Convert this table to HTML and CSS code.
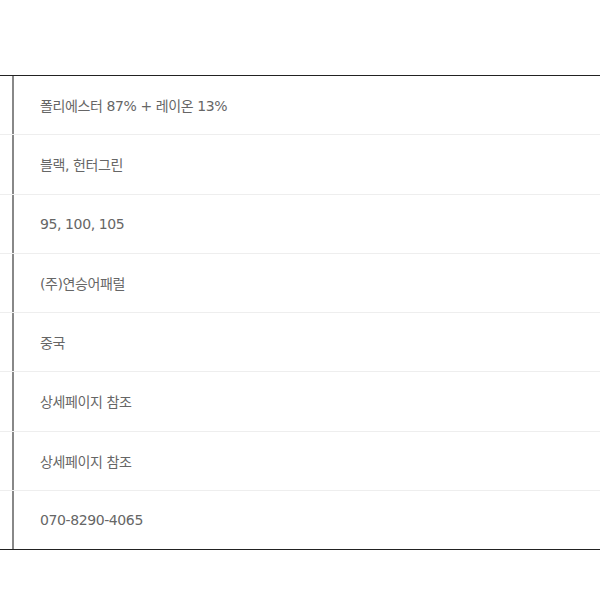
FILE: index.html
```html
<!DOCTYPE html>
<html lang="ko">
<head>
<meta charset="utf-8">
<link rel="stylesheet" href="styles.css">
</head>
<body>
<div class="spec">
  <div class="row"><div class="label"></div><div class="value">폴리에스터 87% + 레이온 13%</div></div>
  <div class="row"><div class="label"></div><div class="value">블랙, 헌터그린</div></div>
  <div class="row"><div class="label"></div><div class="value">95, 100, 105</div></div>
  <div class="row"><div class="label"></div><div class="value">(주)연승어패럴</div></div>
  <div class="row"><div class="label"></div><div class="value">중국</div></div>
  <div class="row"><div class="label"></div><div class="value">상세페이지 참조</div></div>
  <div class="row"><div class="label"></div><div class="value">상세페이지 참조</div></div>
  <div class="row"><div class="label"></div><div class="value">070-8290-4065</div></div>
</div>
</body>
</html>
```

FILE: styles.css
```css
html, body {
  margin: 0;
  padding: 0;
  background: #fff;
}
body {
  padding-top: 75px;
  font-family: "DejaVu Sans", "Noto Sans CJK KR", sans-serif;
}
.spec {
  border-top: 1px solid #222;
  border-bottom: 1px solid #222;
}
.row {
  display: flex;
  height: 59.25px;
  box-sizing: border-box;
  border-bottom: 1px solid #eee;
}
.row:last-child {
  border-bottom: none;
  height: 58.25px;
}
.label {
  width: 12px;
  flex: none;
  border-right: 2px solid #888;
}
.value {
  flex: 1;
  display: flex;
  align-items: center;
  padding-left: 26px;
  font-size: 14px;
  color: #666;
  letter-spacing: -0.4px;
}
```
